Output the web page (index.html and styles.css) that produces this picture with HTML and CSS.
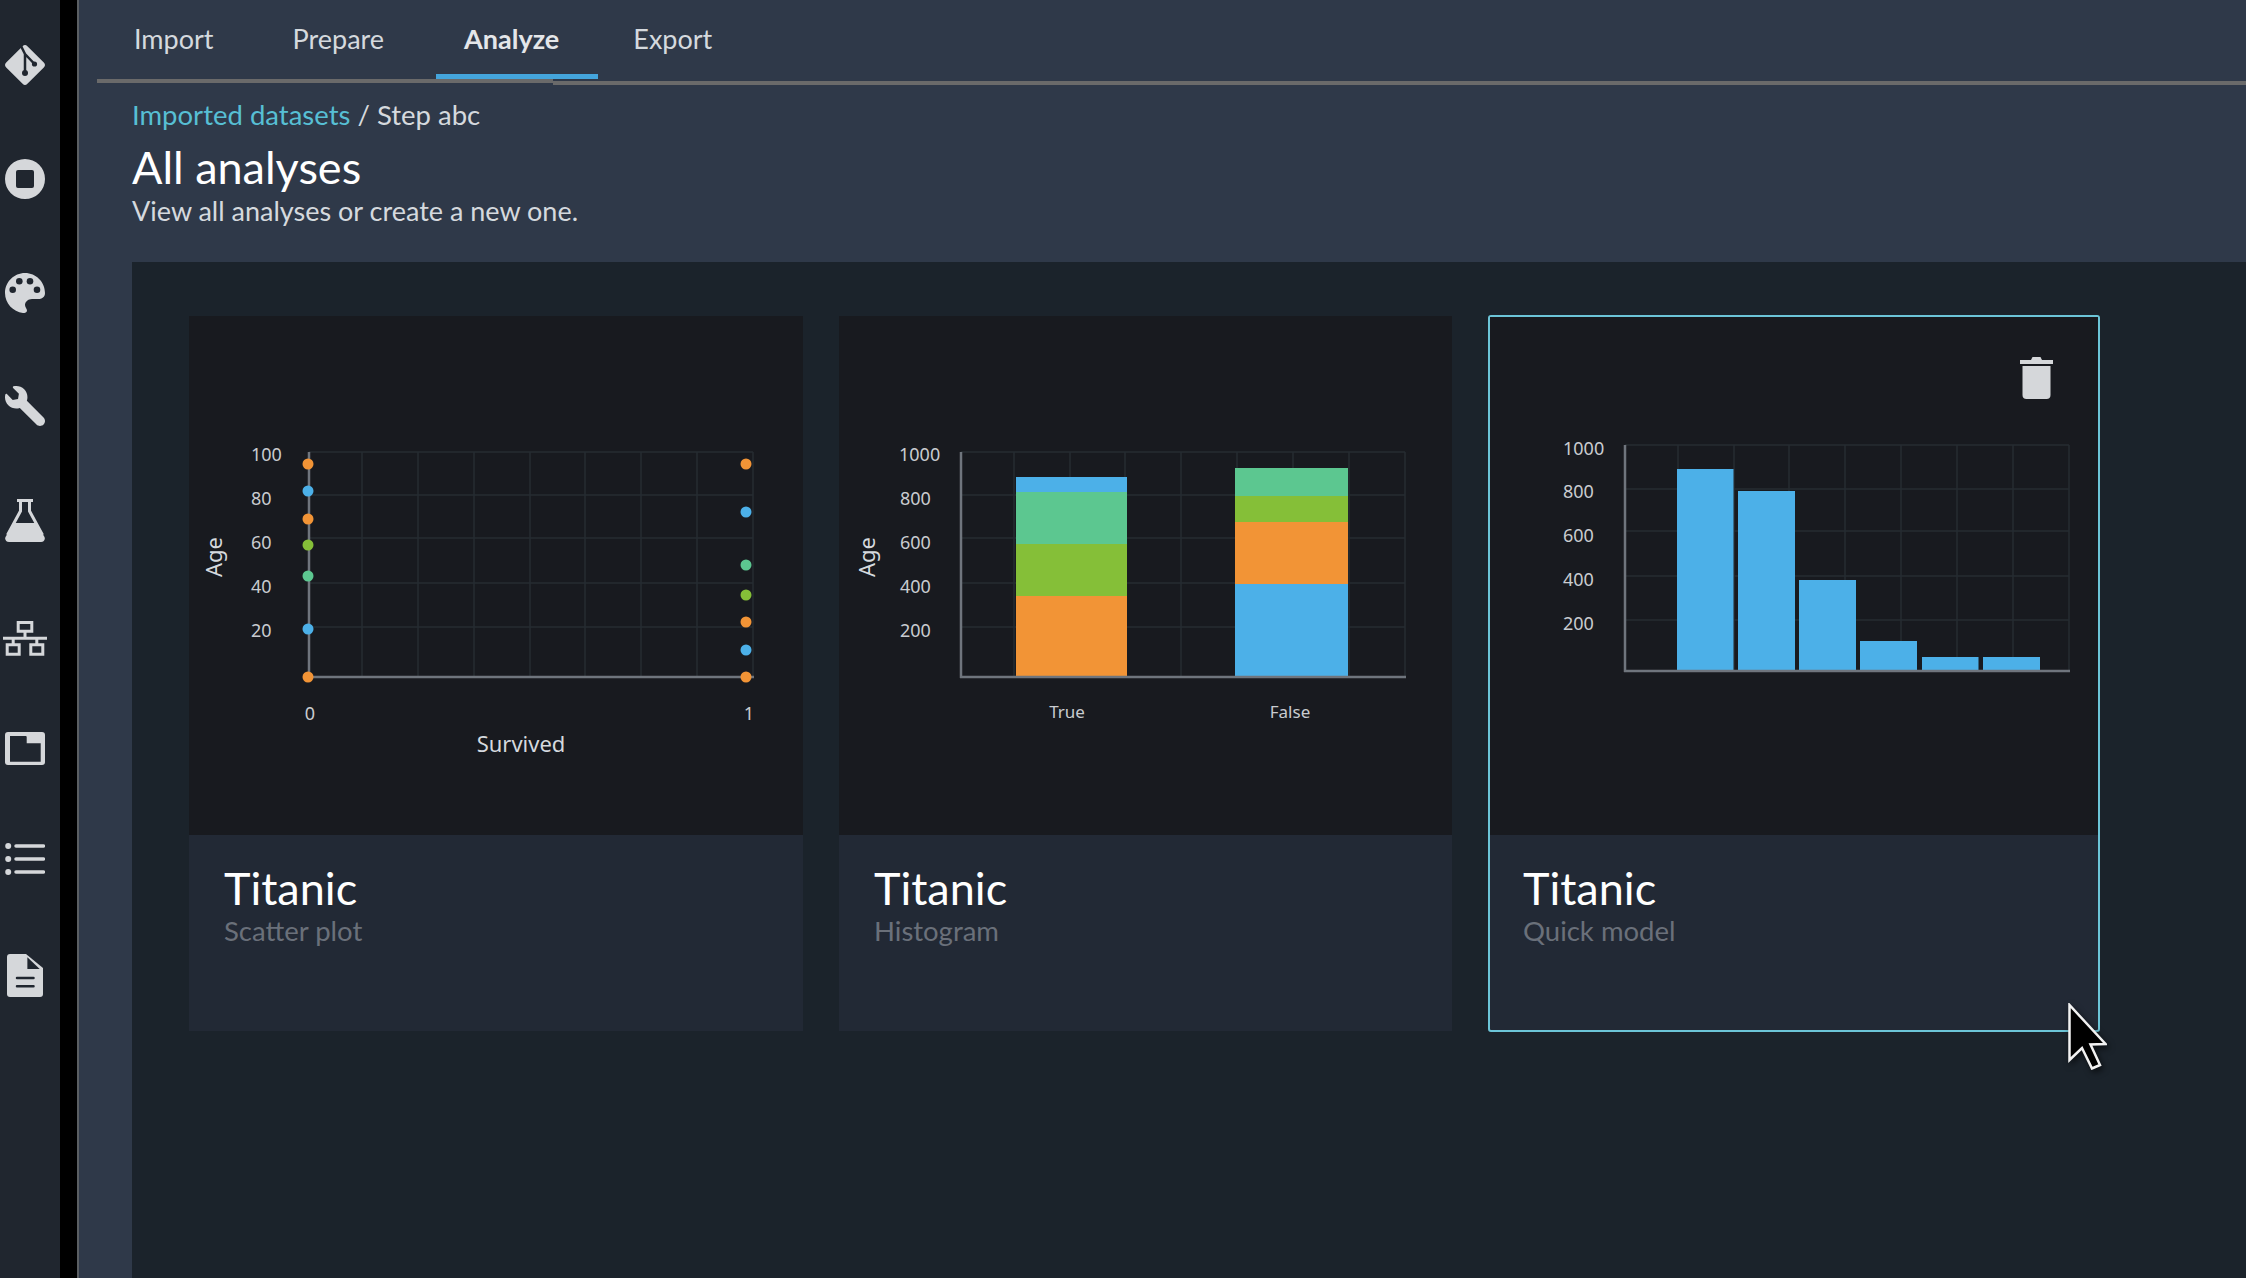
FILE: index.html
```html
<!DOCTYPE html>
<html lang="en">
<head>
<meta charset="utf-8">
<title>All analyses</title>
<link rel="stylesheet" href="styles.css">
</head>
<body>
<div class="app">
  <aside class="rail">
    <svg class="ico" viewBox="0 0 40 40"><path class="f" d="M17.6 1.2 1.2 17.6a3.4 3.4 0 0 0 0 4.8l16.4 16.4a3.4 3.4 0 0 0 4.8 0l16.4-16.4a3.4 3.4 0 0 0 0-4.8L22.4 1.200a3.4 3.400 0 0 0-4.800 0z"/><path class="cut" d="M15.500 0 20 9V28M20 9 29.500 19"/><circle class="hole" cx="20" cy="28" r="3"/><circle class="hole" cx="29.500" cy="19" r="2.600"/></svg>
    <svg class="ico" viewBox="0 0 40 40"><path class="f" fill-rule="evenodd" d="M20 0a20 20 0 1 0 0 40 20 20 0 0 0 0-40zM13 11h14a2 2 0 0 1 2 2v14a2 2 0 0 1-2 2H13a2 2 0 0 1-2-2V13a2 2 0 0 1 2-2z"/></svg>
    <svg class="ico" viewBox="0 0 40 40"><path class="f" d="M20 0C31 0 40 9 40 20C40 24 37 26 33 26H27C23 26 20 29 20 32C20 34 22 36 22 37.500C22 39.500 20 40 18 40C8 39 0 30 0 20C0 9 9 0 20 0Z"/><circle class="hole" cx="7.700" cy="16.700" r="3.300"/><circle class="hole" cx="14.300" cy="8.300" r="3.300"/><circle class="hole" cx="25" cy="8.300" r="3.300"/><circle class="hole" cx="32" cy="16.700" r="3.300"/></svg>
    <svg class="ico" viewBox="0 0 512 512"><g transform="matrix(-1 0 0 1 512 0)"><path class="f" d="M507.730 109.100c-2.240-9.030-13.540-12.090-20.120-5.510l-74.360 74.360-67.880-11.310-11.310-67.880 74.360-74.360c6.620-6.620 3.430-17.900-5.660-20.160-47.380-11.740-99.550.91-136.580 37.930-39.640 39.640-50.550 97.100-34.050 147.200L18.740 402.760c-24.990 24.990-24.990 65.510 0 90.500 24.990 24.990 65.510 24.990 90.500 0l213.210-213.210c50.120 16.710 107.470 5.680 147.370-34.220 37.070-37.070 49.700-89.320 37.910-136.730z"/></g></svg>
    <svg class="ico" viewBox="0 0 40 43"><path class="line" d="M12 1.500H28M15.500 1.500V12L2.500 36M24.500 1.500V12L37.500 36"/><path class="f" d="M9 24H31L39.500 38C40.500 40.500 39 43 36 43H4C1 43 -.5 40.500.5 38Z"/></svg>
    <svg class="ico wide" viewBox="0 0 44 35"><path class="line" d="M15.200 1.500H28.800V10.200H15.200ZM22 10.200V17M0 17.300H44M10.200 17.300V22.300M33.800 17.300V22.300M4.200 23.800H16.200V33.200H4.200ZM27.800 23.800H39.800V33.200H27.800Z"/></svg>
    <svg class="ico" viewBox="0 0 40 33"><path class="f" fill-rule="evenodd" d="M3 0H37a3 3 0 0 1 3 3V30a3 3 0 0 1-3 3H3a3 3 0 0 1-3-3V3a3 3 0 0 1 3-3zM5 4V29.700H35.700V11.300H21.700V5a1 1 0 0 0-1-1z"/></svg>
    <svg class="ico" viewBox="0 0 40 32"><circle class="f" cx="3.200" cy="3" r="3"/><circle class="f" cx="3.200" cy="16" r="3"/><circle class="f" cx="3.200" cy="29" r="3"/><path class="bar" d="M11 3H38.500M11 16H38.500M11 29H38.500"/></svg>
    <svg class="ico doc" viewBox="0 0 36 43"><path class="f" d="M3 0H19L36 14V40a3 3 0 0 1-3 3H3a3 3 0 0 1-3-3V3a3 3 0 0 1 3-3z"/><path class="hole" d="M20.400 3.300 32.700 15H20.400z"/><path class="cut" d="M10 24H26.500M10 32.300H26.500"/></svg>
  </aside>
  <div class="gutter"></div>
  <main class="main">
    <nav class="tabs">
      <a class="tab">Import</a>
      <a class="tab">Prepare</a>
      <a class="tab active">Analyze</a>
      <a class="tab">Export</a>
    </nav>
    <div class="rule"><i class="rule-a"></i><i class="rule-b"></i></div>
    <header class="head">
      <p class="crumbs"><span class="link">Imported datasets</span> / Step abc</p>
      <h1 class="title">All analyses</h1>
      <p class="desc">View all analyses or create a new one.</p>
    </header>
    <section class="panel">
      <div class="cards">
        <article class="card">
          <div class="plot">
            <svg class="chart" viewBox="189 316 614 519">
              <g class="grid">
                <path d="M309 452H753M309 495H753M309 538H753M309 583H753M309 627H753M362 452V677M418 452V677M474 452V677M530 452V677M585 452V677M641 452V677M697 452V677M753 452V677"/>
              </g>
              <path class="axis" d="M309 452V678M309 677H754"/>
              <g class="tick">
                <text x="251" y="461">100</text><text x="251" y="505">80</text><text x="251" y="549">60</text><text x="251" y="593">40</text><text x="251" y="637">20</text>
                <text x="310" y="720" text-anchor="middle">0</text><text x="749" y="720" text-anchor="middle">1</text>
              </g>
              <text class="label" x="521" y="752" text-anchor="middle">Survived</text>
              <text class="label" transform="translate(222 557) rotate(-90)" text-anchor="middle">Age</text>
              <circle class="c-o" cx="308" cy="464" r="5.500"/><circle class="c-b" cx="308" cy="491" r="5.500"/><circle class="c-o" cx="308" cy="519" r="5.500"/><circle class="c-g" cx="308" cy="545" r="5.500"/><circle class="c-t" cx="308" cy="576" r="5.500"/><circle class="c-b" cx="308" cy="629" r="5.500"/><circle class="c-o" cx="308" cy="677" r="5.500"/>
              <circle class="c-o" cx="746" cy="464" r="5.500"/><circle class="c-b" cx="746" cy="512" r="5.500"/><circle class="c-t" cx="746" cy="565" r="5.500"/><circle class="c-g" cx="746" cy="595" r="5.500"/><circle class="c-o" cx="746" cy="622" r="5.500"/><circle class="c-b" cx="746" cy="650" r="5.500"/><circle class="c-o" cx="746" cy="677" r="5.500"/>
            </svg>
          </div>
          <div class="meta"><h2 class="name">Titanic</h2><p class="kind">Scatter plot</p></div>
        </article>
        <article class="card">
          <div class="plot">
            <svg class="chart" viewBox="839 316 613 519">
              <g class="grid">
                <path d="M961 452H1405M961 495H1405M961 538H1405M961 583H1405M961 627H1405M1014 452V677M1070 452V677M1125 452V677M1181 452V677M1237 452V677M1293 452V677M1349 452V677M1405 452V677"/>
              </g>
              <rect class="c-b" x="1016" y="477" width="111" height="15"/><rect class="c-t" x="1016" y="492" width="111" height="52"/><rect class="c-g" x="1016" y="544" width="111" height="52"/><rect class="c-o" x="1016" y="596" width="111" height="81"/>
              <rect class="c-t" x="1235" y="468" width="113" height="28"/><rect class="c-g" x="1235" y="496" width="113" height="26"/><rect class="c-o" x="1235" y="522" width="113" height="62"/><rect class="c-b" x="1235" y="584" width="113" height="93"/>
              <path class="axis" d="M961 452V678M960 677H1406"/>
              <g class="tick">
                <text x="899" y="461">1000</text><text x="900" y="505">800</text><text x="900" y="549">600</text><text x="900" y="593">400</text><text x="900" y="637">200</text>
              </g>
              <g class="tick small">
                <text x="1067" y="718" text-anchor="middle">True</text><text x="1290" y="718" text-anchor="middle">False</text>
              </g>
              <text class="label" transform="translate(875 557) rotate(-90)" text-anchor="middle">Age</text>
            </svg>
          </div>
          <div class="meta"><h2 class="name">Titanic</h2><p class="kind">Histogram</p></div>
        </article>
        <article class="card selected">
          <div class="plot">
            <svg class="chart" viewBox="1490 317 608 518">
              <g class="grid">
                <path d="M1625 445H2069M1625 489H2069M1625 531H2069M1625 576H2069M1625 620H2069M1678 445V671M1734 445V671M1789 445V671M1845 445V671M1901 445V671M1957 445V671M2013 445V671M2069 445V671"/>
              </g>
              <rect class="c-b" x="1677" y="469" width="56.500" height="201"/><rect class="c-b" x="1738" y="491" width="57" height="179"/><rect class="c-b" x="1799" y="580" width="57" height="90"/><rect class="c-b" x="1860" y="641" width="57" height="29"/><rect class="c-b" x="1922" y="657" width="56.500" height="13"/><rect class="c-b" x="1983" y="657" width="57" height="13"/>
              <path class="axis" d="M1625 445V672M1624 671H2070"/>
              <g class="tick">
                <text x="1563" y="455">1000</text><text x="1563" y="498">800</text><text x="1563" y="542">600</text><text x="1563" y="586">400</text><text x="1563" y="630">200</text>
              </g>
            </svg>
            <svg class="trash" viewBox="0 0 33 42"><path class="f" d="M0 3H11L12.500 0H20.500L22 3H33V7H0z"/><path class="f" d="M2.500 9H30.500V38a4 4 0 0 1-4 4H6.500a4 4 0 0 1-4-4z"/></svg>
          </div>
          <div class="meta"><h2 class="name">Titanic</h2><p class="kind">Quick model</p></div>
        </article>
      </div>
    </section>
  </main>
</div>
<svg class="cursor" viewBox="0 0 39 67"><path d="M1.500 2V57L14 45 24 65.500 32 62 22.500 41.500 37.500 41z"/></svg>
</body>
</html>
```
FILE: styles.css
```css
* { box-sizing: border-box; }
html, body { margin: 0; height: 1278px; overflow: hidden; background: #000; }
body { font-family: "Lato", "Noto Sans", sans-serif; color: #d5d9de; position: relative; }
p, h1, h2 { margin: 0; font-weight: 400; }

.app { display: flex; height: 1278px; }

.rail {
  width: 60px; flex: none; background: #20262f;
  display: grid; justify-items: center; align-items: center;
  padding: 8px 10px 0 0;
  grid-template-rows: 114px 114px 113px 114px 115px 121px 99px 122px 111px;
}
.ico { width: 40px; height: auto; display: block; }
.ico.wide { width: 44px; }
.ico.doc { width: 36px; }
.f { fill: #d5d7da; }
.cut { fill: none; stroke: #20262f; stroke-width: 2.500; stroke-linecap: round; }
.hole { fill: #20262f; }
.line { fill: none; stroke: #d5d7da; stroke-width: 3; }
.bar { fill: none; stroke: #d5d7da; stroke-width: 3.500; stroke-linecap: round; }

.gutter { width: 19px; flex: none; background: #000; border-right: 2px solid #5b5f63; }

.main { flex: 1; min-width: 0; display: flex; flex-direction: column; background: #2f3949; }

.tabs { display: flex; gap: 79px; height: 79px; padding-left: 55px; }
.tab { font-size: 27px; line-height: 34px; padding-top: 22px; color: #d5d9de; }
.tab.active {
  font-weight: 700; color: #e4e6e9;
  padding: 22px 39px 0 28px; margin: 0 -44px 0 -27px;
  height: 79px; border-bottom: 5px solid #44a5dc;
}
.rule { display: flex; margin-left: 18px; height: 6px; }
.rule-a { width: 456px; height: 4px; background: #6a6a6a; }
.rule-b { flex: 1; height: 4px; margin-top: 2px; background: #6a6a6a; }

.head { padding: 14px 0 0 53px; }
.crumbs { font-size: 27.5px; line-height: 32px; color: #d5d9de; }
.link { color: #57bfd4; }
.title { font-size: 45px; line-height: 50px; margin-top: 11px; color: #fff; }
.desc { font-size: 27px; line-height: 32px; margin-top: 3px; color: #d5d9de; }

.panel { flex: 1; margin: 35px 0 0 53px; padding: 54px 0 0 57px; background: #1b232b; }
.cards { display: grid; grid-template-columns: 614px 613px 612px; column-gap: 36px; }
.card { height: 715px; display: flex; flex-direction: column; background: #222935; }
.card.selected { border: 2px solid #6cc5d8; border-radius: 3px; height: 717px; margin-top: -1px; }
.plot { height: 519px; flex: none; background: #181a1f; position: relative; }
.card.selected .plot { height: 518px; }
.chart { width: 100%; height: 100%; display: block; }
.meta { padding: 28px 0 0 35px; }
.card.selected .meta { padding-left: 33px; }
.name { font-size: 45px; line-height: 50px; color: #fff; }
.kind { font-size: 27.5px; line-height: 32px; margin-top: 2px; color: #6a707a; }

.grid path { fill: none; stroke: #262c32; stroke-width: 1.500; }
.axis { fill: none; stroke: #6f757d; stroke-width: 2.500; }
.tick text { font-family: "Noto Sans", sans-serif; font-size: 18px; fill: #c9ccd0; }
.tick.small text { font-size: 17px; }
.label { font-family: "Noto Sans", sans-serif; font-size: 22px; fill: #d5d9de; }
.c-o { fill: #f29436; }
.c-b { fill: #4cb0e8; }
.c-g { fill: #85bf38; }
.c-t { fill: #5cc790; }

.trash { position: absolute; right: 45px; top: 40px; width: 33px; height: 42px; }

.cursor {
  position: absolute; left: 2068px; top: 1003px; width: 39px; height: 67px;
  filter: drop-shadow(2px 3px 3px rgba(0,0,0,.6));
}
.cursor path { fill: #000; stroke: #f2f2f2; stroke-width: 2.500; stroke-linejoin: miter; }
```
